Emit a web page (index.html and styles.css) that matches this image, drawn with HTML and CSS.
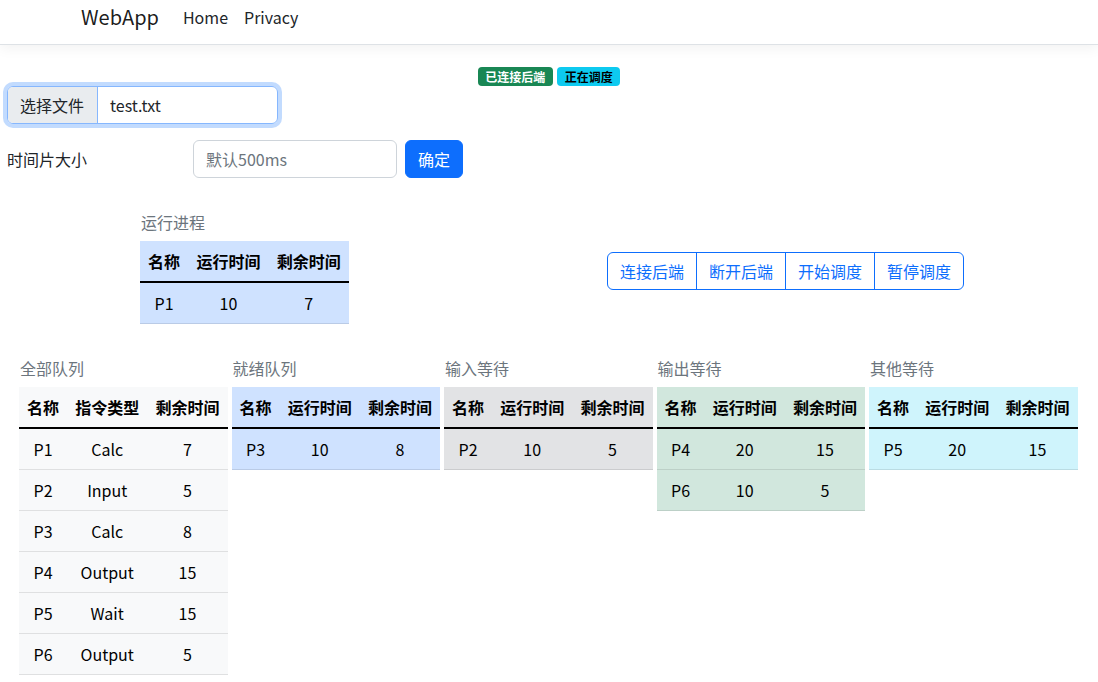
FILE: index.html
```html
<!DOCTYPE html>
<html lang="zh-CN">
<head>
<meta charset="utf-8">
<title>WebApp</title>
<link rel="stylesheet" href="styles.css">
</head>
<body>
<header class="navbar">
  <div class="container nav-inner">
    <a class="brand" href="#">WebApp</a>
    <nav class="nav-links">
      <a class="nav-link" href="#">Home</a>
      <a class="nav-link" href="#">Privacy</a>
    </nav>
  </div>
</header>
<main class="main">
  <div class="status">
    <span class="badge badge-success">已连接后端</span>
    <span class="badge badge-info">正在调度</span>
  </div>
  <div class="file-input">
    <span class="file-btn">选择文件</span>
    <span class="file-name">test.txt</span>
  </div>
  <div class="time-row">
    <label class="time-label">时间片大小</label>
    <div class="text-input placeholder">默认500ms</div>
    <button class="btn btn-primary">确定</button>
  </div>
  <div class="running-row">
    <div class="queue running">
      <div class="queue-title">运行进程</div>
      <table class="table table-primary">
        <thead><tr><th>名称</th><th>运行时间</th><th>剩余时间</th></tr></thead>
        <tbody><tr><td>P1</td><td>10</td><td>7</td></tr></tbody>
      </table>
    </div>
    <div class="btn-group">
      <button class="btn btn-outline">连接后端</button>
      <button class="btn btn-outline">断开后端</button>
      <button class="btn btn-outline">开始调度</button>
      <button class="btn btn-outline">暂停调度</button>
    </div>
  </div>
  <div class="queues">
    <div class="queue">
      <div class="queue-title">全部队列</div>
      <table class="table table-light">
        <thead><tr><th>名称</th><th>指令类型</th><th>剩余时间</th></tr></thead>
        <tbody>
          <tr><td>P1</td><td>Calc</td><td>7</td></tr>
          <tr><td>P2</td><td>Input</td><td>5</td></tr>
          <tr><td>P3</td><td>Calc</td><td>8</td></tr>
          <tr><td>P4</td><td>Output</td><td>15</td></tr>
          <tr><td>P5</td><td>Wait</td><td>15</td></tr>
          <tr><td>P6</td><td>Output</td><td>5</td></tr>
        </tbody>
      </table>
    </div>
    <div class="queue">
      <div class="queue-title">就绪队列</div>
      <table class="table table-primary">
        <thead><tr><th>名称</th><th>运行时间</th><th>剩余时间</th></tr></thead>
        <tbody><tr><td>P3</td><td>10</td><td>8</td></tr></tbody>
      </table>
    </div>
    <div class="queue">
      <div class="queue-title">输入等待</div>
      <table class="table table-secondary">
        <thead><tr><th>名称</th><th>运行时间</th><th>剩余时间</th></tr></thead>
        <tbody><tr><td>P2</td><td>10</td><td>5</td></tr></tbody>
      </table>
    </div>
    <div class="queue">
      <div class="queue-title">输出等待</div>
      <table class="table table-success">
        <thead><tr><th>名称</th><th>运行时间</th><th>剩余时间</th></tr></thead>
        <tbody>
          <tr><td>P4</td><td>20</td><td>15</td></tr>
          <tr><td>P6</td><td>10</td><td>5</td></tr>
        </tbody>
      </table>
    </div>
    <div class="queue">
      <div class="queue-title">其他等待</div>
      <table class="table table-info">
        <thead><tr><th>名称</th><th>运行时间</th><th>剩余时间</th></tr></thead>
        <tbody><tr><td>P5</td><td>20</td><td>15</td></tr></tbody>
      </table>
    </div>
  </div>
</main>
</body>
</html>
```
FILE: styles.css
```css
* { box-sizing: border-box; }
html, body { margin: 0; padding: 0; }
body {
  font-family: "Noto Sans CJK SC", "Noto Sans", sans-serif;
  font-size: 16px;
  line-height: 1.5;
  color: #212529;
  background: #fff;
}
a { text-decoration: none; }

.navbar {
  height: 45px;
  border-bottom: 1px solid #dee2e6;
  box-shadow: 0 4px 12px rgba(0, 0, 0, .05);
  background: #fff;
}
.container {
  max-width: 960px;
  margin: 0 auto;
  padding: 0 12px;
}
.nav-inner {
  display: flex;
  align-items: center;
  padding-top: 2px;
}
.brand {
  font-size: 20px;
  line-height: 30px;
  color: rgba(0, 0, 0, .9);
  margin-right: 16px;
}
.nav-links { display: flex; }
.nav-link {
  color: #212529;
  padding: 0 8px;
  line-height: 30px;
}

.main { padding: 0 7px; }

.status {
  display: flex;
  justify-content: center;
  gap: 4px;
  margin-top: 22px;
  height: 19px;
}
.badge {
  display: inline-block;
  font-size: 12px;
  font-weight: 700;
  line-height: 12px;
  padding: 3.5px 7.7px;
  border-radius: 4px;
}
.badge-success { background: #198754; color: #fff; }
.badge-info { background: #0dcaf0; color: #000; }

.file-input {
  display: flex;
  width: 271px;
  height: 38px;
  border: 1px solid #86b7fe;
  border-radius: 6px;
  box-shadow: 0 0 0 4px rgba(13, 110, 253, .25);
  overflow: hidden;
}
.file-btn {
  background: #e9ecef;
  border-right: 1px solid #86b7fe;
  padding: 6px 12px;
  width: 90px;
}
.file-name { padding: 6px 12px; }

.time-row {
  display: flex;
  align-items: center;
  margin-top: 16px;
  gap: 8px;
}
.time-label { width: 178px; }
.text-input {
  width: 204px;
  height: 38px;
  border: 1px solid #ced4da;
  border-radius: 6px;
  padding: 6px 12px;
}
.placeholder { color: #6c757d; }

.btn {
  font-family: inherit;
  font-size: 16px;
  line-height: 24px;
  padding: 6px 12px;
  border: 1px solid transparent;
  border-radius: 6px;
  cursor: pointer;
  background: transparent;
}
.btn-primary {
  background: #0d6efd;
  border-color: #0d6efd;
  color: #fff;
}

.running-row {
  display: flex;
  align-items: flex-start;
  margin-top: 32px;
}
.running {
  width: 209px;
  margin-left: 133px;
}
.btn-group {
  display: flex;
  margin-top: 42px;
  margin-left: 258px;
}
.btn-outline {
  color: #0d6efd;
  border-color: #0d6efd;
  border-radius: 0;
  margin-left: -1px;
  min-width: 90px;
}
.btn-outline:first-child {
  margin-left: 0;
  border-radius: 6px 0 0 6px;
}
.btn-outline:last-child { border-radius: 0 6px 6px 0; }

.queues {
  display: grid;
  grid-template-columns: repeat(5, 208.5px);
  column-gap: 4px;
  margin-top: 32px;
  margin-left: 12px;
  align-items: start;
}
.queue-title {
  color: #6c757d;
  margin-bottom: 7px;
  padding-left: 1px;
}

.table {
  width: 100%;
  border-collapse: collapse;
  color: #000;
  background: var(--tbg);
}
.table th, .table td {
  padding: 8px;
  text-align: center;
  border-bottom: 1px solid var(--tbc);
  white-space: nowrap;
}
.table th { font-weight: 700; }
.table tbody { border-top: 2px solid #000; }
.table-primary { --tbg: #cfe2ff; --tbc: #bacbe6; }
.table-light { --tbg: #f8f9fa; --tbc: #dfe0e1; }
.table-secondary { --tbg: #e2e3e5; --tbc: #cbccce; }
.table-success { --tbg: #d1e7dd; --tbc: #bcd0c7; }
.table-info { --tbg: #cff4fc; --tbc: #badce3; }
```
